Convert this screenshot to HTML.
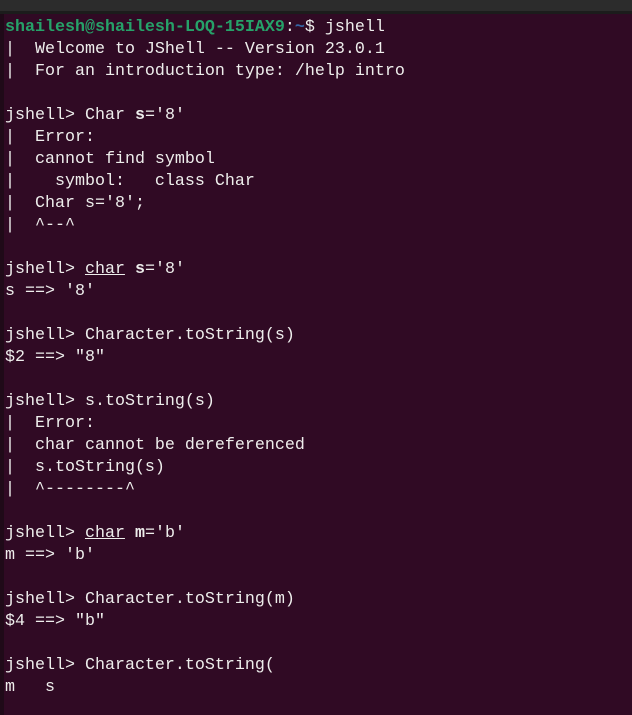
<!DOCTYPE html><html><head><style>
html,body{margin:0;padding:0;width:632px;height:715px;overflow:hidden;background:#300a24}
#top{position:absolute;left:0;top:0;width:632px;height:11px;background:#2c2c2c;border-bottom:3px solid #1c1c1c}
#left{position:absolute;left:0;top:14px;width:4px;height:701px;background:#1f0a18}
pre{position:absolute;left:5px;top:17px;margin:0;font-family:"Liberation Mono",monospace;font-size:16.67px;line-height:22px;color:#eeeeec}
.g{color:#26a269;font-weight:bold}.b{color:#3465a4;font-weight:bold}.u{text-decoration:underline}
</style></head><body><div id="top"></div><div id="left"></div>
<pre><span class="g">shailesh@shailesh-LOQ-15IAX9</span>:<span class="b">~</span>$ jshell
|  Welcome to JShell -- Version 23.0.1
|  For an introduction type: /help intro

jshell&gt; Char <b>s</b>='8'
|  Error:
|  cannot find symbol
|    symbol:   class Char
|  Char s='8';
|  ^--^

jshell&gt; <span class="u">char</span> <b>s</b>='8'
s ==&gt; '8'

jshell&gt; Character.toString(s)
$2 ==&gt; "8"

jshell&gt; s.toString(s)
|  Error:
|  char cannot be dereferenced
|  s.toString(s)
|  ^--------^

jshell&gt; <span class="u">char</span> <b>m</b>='b'
m ==&gt; 'b'

jshell&gt; Character.toString(m)
$4 ==&gt; "b"

jshell&gt; Character.toString(
m   s
</pre></body></html>
